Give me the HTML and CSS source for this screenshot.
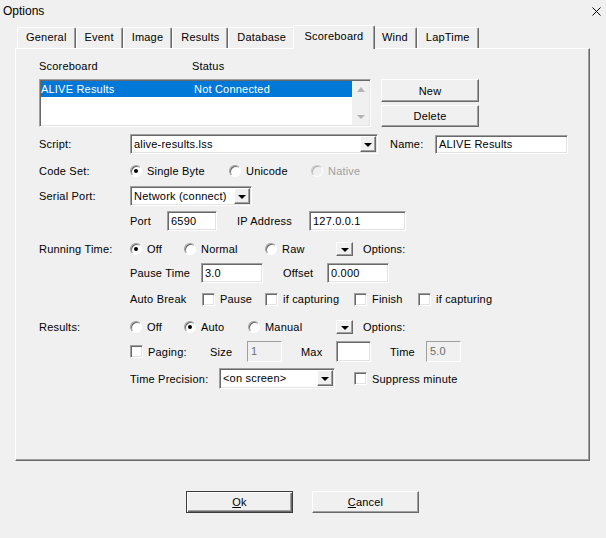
FILE: index.html
```html
<!DOCTYPE html>
<html lang="en">
<head>
  <meta charset="UTF-8" />
  <title>Options</title>
  <link rel="stylesheet" href="styles.css">
</head>
<body>
  <div class="titlebar">
    <span class="title">Options</span>
    <svg class="close" width="9" height="9" viewBox="0 0 9 9">
      <path d="M0.5 0.5 L8.5 8.5 M8.5 0.5 L0.5 8.5" stroke="#000" stroke-width="1" fill="none"/>
    </svg>
  </div>

  <div class="tabs">
    <div class="tab">General</div>
    <div class="tab">Event</div>
    <div class="tab">Image</div>
    <div class="tab">Results</div>
    <div class="tab">Database</div>
    <div class="tab active">Scoreboard</div>
    <div class="tab">Wind</div>
    <div class="tab">LapTime</div>
  </div>

  <div class="panel">
    <div class="row head">
      <span class="col-name">Scoreboard</span>
      <span>Status</span>
    </div>

    <div class="row list-row">
      <div class="listbox">
        <div class="list-items">
          <div class="item selected">
            <span class="col-name">ALIVE Results</span>
            <span>Not Connected</span>
          </div>
        </div>
        <div class="vscroll">
          <div class="arrow"><span class="tri-up"></span></div>
          <div class="arrow"><span class="tri-down"></span></div>
        </div>
      </div>
      <div class="side-btns">
        <button class="btn new-btn">New</button>
        <button class="btn">Delete</button>
      </div>
    </div>

    <div class="row script-row">
      <span class="lbl">Script:</span>
      <div class="combo script-combo">
        <span class="combo-text">alive-results.lss</span>
        <span class="dropbtn"><span class="tri"></span></span>
      </div>
      <span class="name-lbl">Name:</span>
      <div class="field name-field">ALIVE Results</div>
    </div>

    <div class="row code-row">
      <span class="lbl">Code Set:</span>
      <label class="opt single-opt"><span class="radio on"></span>Single Byte</label>
      <label class="opt unicode-opt"><span class="radio"></span>Unicode</label>
      <label class="opt disabled"><span class="radio"></span>Native</label>
    </div>

    <div class="row serial-row">
      <span class="lbl">Serial Port:</span>
      <div class="combo serial-combo">
        <span class="combo-text">Network (connect)</span>
        <span class="dropbtn"><span class="tri"></span></span>
      </div>
    </div>

    <div class="row port-row">
      <span class="lbl"></span>
      <span class="port-lbl">Port</span>
      <div class="field port-field">6590</div>
      <span class="ip-lbl">IP Address</span>
      <div class="field ip-field">127.0.0.1</div>
    </div>

    <div class="row running-row">
      <span class="lbl">Running Time:</span>
      <label class="opt rt-off"><span class="radio on"></span>Off</label>
      <label class="opt rt-normal"><span class="radio"></span>Normal</label>
      <label class="opt rt-raw"><span class="radio"></span>Raw</label>
      <span class="dropbtn solo"><span class="tri"></span></span>
      <span class="options-lbl">Options:</span>
    </div>

    <div class="row pause-row">
      <span class="lbl"></span>
      <span class="pause-lbl">Pause Time</span>
      <div class="field short-field">3.0</div>
      <span class="offset-lbl">Offset</span>
      <div class="field short-field">0.000</div>
    </div>

    <div class="row break-row">
      <span class="lbl"></span>
      <span class="break-lbl">Auto Break</span>
      <label class="opt pause-opt"><span class="check"></span>Pause</label>
      <label class="opt capture-opt"><span class="check"></span>if capturing</label>
      <label class="opt finish-opt"><span class="check"></span>Finish</label>
      <label class="opt"><span class="check"></span>if capturing</label>
    </div>

    <div class="row results-row">
      <span class="lbl">Results:</span>
      <label class="opt rt-off"><span class="radio"></span>Off</label>
      <label class="opt res-auto"><span class="radio on"></span>Auto</label>
      <label class="opt res-manual"><span class="radio"></span>Manual</label>
      <span class="dropbtn solo"><span class="tri"></span></span>
      <span class="options-lbl">Options:</span>
    </div>

    <div class="row paging-row">
      <span class="lbl"></span>
      <label class="opt paging-opt"><span class="check"></span>Paging:</label>
      <span class="size-lbl">Size</span>
      <div class="field tiny-field off">1</div>
      <span class="max-lbl">Max</span>
      <div class="field tiny-field"></div>
      <span class="time-lbl">Time</span>
      <div class="field tiny-field off">5.0</div>
    </div>

    <div class="row precision-row">
      <span class="lbl"></span>
      <span class="precision-lbl">Time Precision:</span>
      <div class="combo precision-combo">
        <span class="combo-text">&lt;on screen&gt;</span>
        <span class="dropbtn"><span class="tri"></span></span>
      </div>
      <label class="opt suppress-opt"><span class="check"></span>Suppress minute</label>
    </div>
  </div>

  <div class="footer">
    <button class="btn dlg-btn default"><u>O</u>k</button>
    <button class="btn dlg-btn"><u>C</u>ancel</button>
  </div>
</body>
</html>
```

FILE: styles.css
```css
* {
  margin: 0;
  padding: 0;
  box-sizing: border-box;
}

body {
  width: 606px;
  height: 538px;
  overflow: hidden;
  background: #f0f0f0;
  font-family: "Liberation Sans", Arial, sans-serif;
  font-size: 11px;
  letter-spacing: 0.2px;
  color: #000;
}

/* title bar */
.titlebar {
  height: 25px;
  display: flex;
  justify-content: space-between;
}

.title {
  font-size: 12px;
  letter-spacing: 0;
  line-height: 22px;
  padding-left: 3px;
}

.close {
  margin: 7px 5px 0 0;
}

/* tabs */
.tabs {
  display: flex;
  align-items: flex-end;
  height: 23px;
  padding-left: 17px;
  position: relative;
  z-index: 1;
}

.tab {
  height: 21px;
  padding: 0 8px;
  line-height: 19px;
  border: 1px solid #fff;
  border-right-color: #696969;
  border-bottom: none;
  box-shadow: inset -1px 0 #a0a0a0;
  border-radius: 2px 2px 0 0;
  white-space: nowrap;
}

.tab.active {
  height: 24px;
  margin: 0 -2px -1px;
  padding: 0 10.5px;
  line-height: 21px;
  background: #f0f0f0;
  position: relative;
}

/* panel */
.panel {
  margin-left: 15px;
  width: 575px;
  height: 413px;
  border: 1px solid #fff;
  border-right-color: #696969;
  border-bottom-color: #696969;
  box-shadow: inset -1px -1px #a0a0a0;
  padding: 10px 0 0 23px;
}

.row {
  display: flex;
  align-items: center;
  height: 20px;
  white-space: nowrap;
}

.lbl {
  width: 91px;
  flex-shrink: 0;
}

.head {
  height: 13px;
}

.col-name {
  width: 153px;
  flex-shrink: 0;
}

/* list */
.list-row {
  height: 48px;
  margin-top: 7px;
  align-items: flex-start;
}

.listbox {
  width: 332px;
  height: 48px;
  display: flex;
  background: #fff;
  border: 1px solid;
  border-color: #a0a0a0 #fff #fff #a0a0a0;
  box-shadow: inset 1px 1px #696969, inset -1px -1px #e3e3e3;
  padding: 1px;
}

.list-items {
  flex: 1;
}

.item {
  display: flex;
  height: 16px;
  line-height: 16px;
}

.item.selected {
  background: #0078d7;
  color: #fff;
}

.vscroll {
  width: 17px;
  display: flex;
  flex-direction: column;
  justify-content: space-between;
  background: #f0f0f0;
}

.arrow {
  height: 17px;
  display: flex;
  align-items: center;
  justify-content: center;
}

.tri-up {
  border-left: 4px solid transparent;
  border-right: 4px solid transparent;
  border-bottom: 5px solid #b4b4b4;
}

.tri-down {
  border-left: 4px solid transparent;
  border-right: 4px solid transparent;
  border-top: 4px solid #b4b4b4;
}

.side-btns {
  margin-left: 10px;
  display: flex;
  flex-direction: column;
  gap: 3px;
}

/* buttons */
.btn {
  width: 98px;
  height: 22px;
  font: inherit;
  letter-spacing: inherit;
  color: #000;
  background: #f0f0f0;
  border: 1px solid;
  border-color: #fff #696969 #696969 #fff;
  box-shadow: inset -1px -1px #a0a0a0;
}

.new-btn {
  height: 23px;
}

.dlg-btn {
  width: 107px;
}

.btn.default {
  border: 1px solid #3c3c3c;
  box-shadow: inset 1px 1px #fff, inset -1px -1px #696969, inset -2px -2px #a0a0a0;
}

/* fields */
.field {
  height: 20px;
  line-height: 18px;
  background: #fff;
  border: 1px solid;
  border-color: #a0a0a0 #fff #fff #a0a0a0;
  box-shadow: inset 1px 1px #696969, inset -1px -1px #e3e3e3;
  padding: 0 3px;
}

.field.off {
  background: #f0f0f0;
  box-shadow: none;
  color: #6d6d6d;
}

.combo {
  height: 20px;
  display: flex;
  background: #fff;
  border: 1px solid;
  border-color: #a0a0a0 #fff #fff #a0a0a0;
  box-shadow: inset 1px 1px #696969, inset -1px -1px #e3e3e3;
  padding: 1px;
}

.combo-text {
  flex: 1;
  line-height: 16px;
  padding-left: 2px;
}

.dropbtn {
  width: 16px;
  height: 16px;
  display: flex;
  align-items: center;
  justify-content: center;
  background: #f0f0f0;
  border: 1px solid;
  border-color: #fff #696969 #696969 #fff;
  box-shadow: inset -1px -1px #a0a0a0;
}

.dropbtn.solo {
  width: 17px;
  height: 14px;
}

.tri {
  border-left: 4px solid transparent;
  border-right: 4px solid transparent;
  border-top: 4px solid #000;
  margin-top: 1px;
}

/* radios and checks */
.opt {
  display: flex;
  align-items: center;
  gap: 5px;
}

.radio {
  width: 12px;
  height: 12px;
  border-radius: 50%;
  background: #fff;
  border: 1px solid;
  border-color: #a0a0a0 #fff #fff #a0a0a0;
  box-shadow: inset 1px 1px #696969;
  position: relative;
}

.radio.on::after {
  content: "";
  position: absolute;
  left: 3px;
  top: 3px;
  width: 4px;
  height: 4px;
  border-radius: 50%;
  background: #000;
}

.opt.disabled {
  color: #a0a0a0;
}

.opt.disabled .radio {
  background: #f0f0f0;
  border-color: #c8c8c8 #fff #fff #c8c8c8;
  box-shadow: inset 1px 1px #b4b4b4;
}

.check {
  width: 13px;
  height: 13px;
  background: #fff;
  border: 1px solid;
  border-color: #a0a0a0 #fff #fff #a0a0a0;
  box-shadow: inset 1px 1px #696969, inset -1px -1px #e3e3e3;
}

/* row specifics */
.script-row { margin-top: 7px; }
.script-combo { width: 248px; }
.name-lbl { margin-left: 12px; width: 45px; }
.name-field { width: 133px; height: 19px; line-height: 17px; }

.code-row { margin-top: 7px; }
.single-opt { width: 99px; }
.unicode-opt { width: 82px; }

.serial-row { margin-top: 5px; }
.serial-combo { width: 122px; }

.port-row { margin-top: 5px; }
.port-lbl { width: 37px; }
.port-field { width: 50px; }
.ip-lbl { margin-left: 20px; width: 72px; }
.ip-field { width: 97px; }

.running-row { margin-top: 8px; }
.rt-off { width: 54px; }
.rt-normal { width: 81px; }
.rt-raw { width: 71px; }
.options-lbl { margin-left: 10px; }

.pause-row { margin-top: 4px; }
.pause-lbl { width: 71px; }
.short-field { width: 62px; }
.offset-lbl { margin-left: 20px; width: 44px; }

.break-row { margin-top: 6px; }
.break-lbl { width: 72px; }
.pause-opt { width: 63px; }
.capture-opt { width: 89px; }
.finish-opt { width: 64px; }

.results-row { margin-top: 8px; }
.res-auto { width: 64px; }
.res-manual { width: 88px; }

.paging-row { margin-top: 4px; height: 21px; }
.paging-opt { width: 80px; }
.size-lbl { width: 37px; }
.tiny-field { width: 35px; height: 21px; line-height: 19px; }
.max-lbl { margin-left: 19px; width: 35px; }
.time-lbl { margin-left: 19px; width: 36px; }

.precision-row { margin-top: 6px; height: 21px; }
.precision-lbl { width: 89px; }
.precision-combo { width: 116px; height: 21px; }
.suppress-opt { margin-left: 19px; }

/* footer */
.footer {
  display: flex;
  gap: 19px;
  padding-left: 186px;
  margin-top: 30px;
}
```
